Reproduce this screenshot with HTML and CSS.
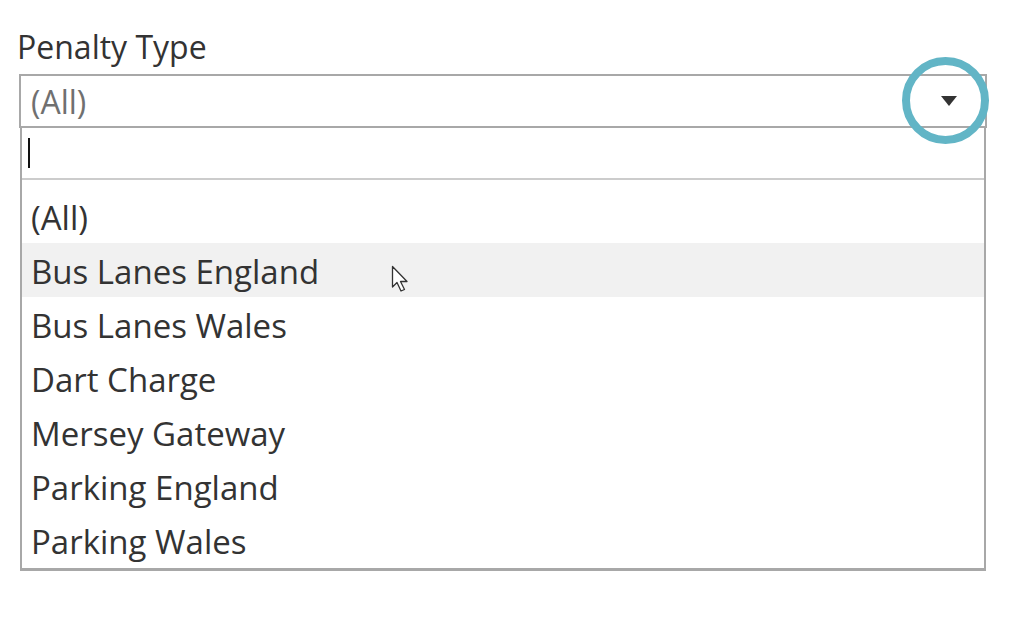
FILE: index.html
```html
<!DOCTYPE html>
<html>

<head>
  <title>Penalty Type</title>
  <link rel="stylesheet" href="styles.css">
</head>

<body>
  <div class="filter">
    <h1 class="filter-title">Penalty Type</h1>
    <div class="select">
      <span class="select-value">(All)</span>
      <span class="select-arrow"></span>
      <span class="highlight-ring"></span>
    </div>
    <div class="dropdown">
      <div class="search"><span class="caret"></span></div>
      <ul class="options">
        <li>(All)</li>
        <li class="hover">Bus Lanes England
          <svg class="pointer" width="22" height="30" viewBox="0 0 22 30">
            <path d="M1.5 1.5 L1.5 22 L6 17.5 L10 26 L13.5 24.5 L9.5 16.5 L16 16.5 Z" fill="#fff" stroke="#333" stroke-width="1.3" stroke-linejoin="round" />
          </svg>
        </li>
        <li>Bus Lanes Wales</li>
        <li>Dart Charge</li>
        <li>Mersey Gateway</li>
        <li>Parking England</li>
        <li>Parking Wales</li>
      </ul>
    </div>
  </div>
</body>

</html>
```

FILE: styles.css
```css
body {
    margin: 0;
    background-color: #fff;
    font-family: "Open Sans", Arial, sans-serif;
}

.filter {
    width: 968px;
    padding: 24px 0 0 19px;
}

.filter-title {
    margin: 0 0 4px -2px;
    font-size: 32px;
    font-weight: 400;
    line-height: 46px;
    color: #333;
}

.select {
    position: relative;
    height: 50px;
    border: 2px solid #a8a8a8;
    display: flex;
    align-items: center;
    padding-left: 10px;
}

.select-value {
    font-size: 32px;
    color: #707070;
    flex: 1;
}

.select-arrow {
    width: 0;
    height: 0;
    border-left: 8px solid transparent;
    border-right: 8px solid transparent;
    border-top: 10px solid #333;
    margin-right: 28px;
}

.highlight-ring {
    position: absolute;
    left: 881px;
    top: -19px;
    width: 71px;
    height: 71px;
    border: 8px solid #62b5c6;
    border-radius: 50%;
}

.dropdown {
    border: 2px solid #a8a8a8;
    border-top: none;
    border-bottom-width: 3px;
    margin-left: 1px;
    margin-right: 1px;
}

.search {
    height: 50px;
    border-bottom: 2px solid #ccc;
    display: flex;
    align-items: center;
    padding-left: 6px;
}

.caret {
    width: 2px;
    height: 30px;
    background-color: #111;
}

.options {
    list-style-type: none;
    margin: 0;
    padding: 9px 0 1px 0;
}

.options li {
    position: relative;
    height: 54px;
    line-height: 58px;
    padding-left: 9px;
    font-size: 33px;
    color: #333;
}

.options li.hover {
    background-color: #f1f1f1;
}

.pointer {
    position: absolute;
    left: 369px;
    top: 22px;
}
```
